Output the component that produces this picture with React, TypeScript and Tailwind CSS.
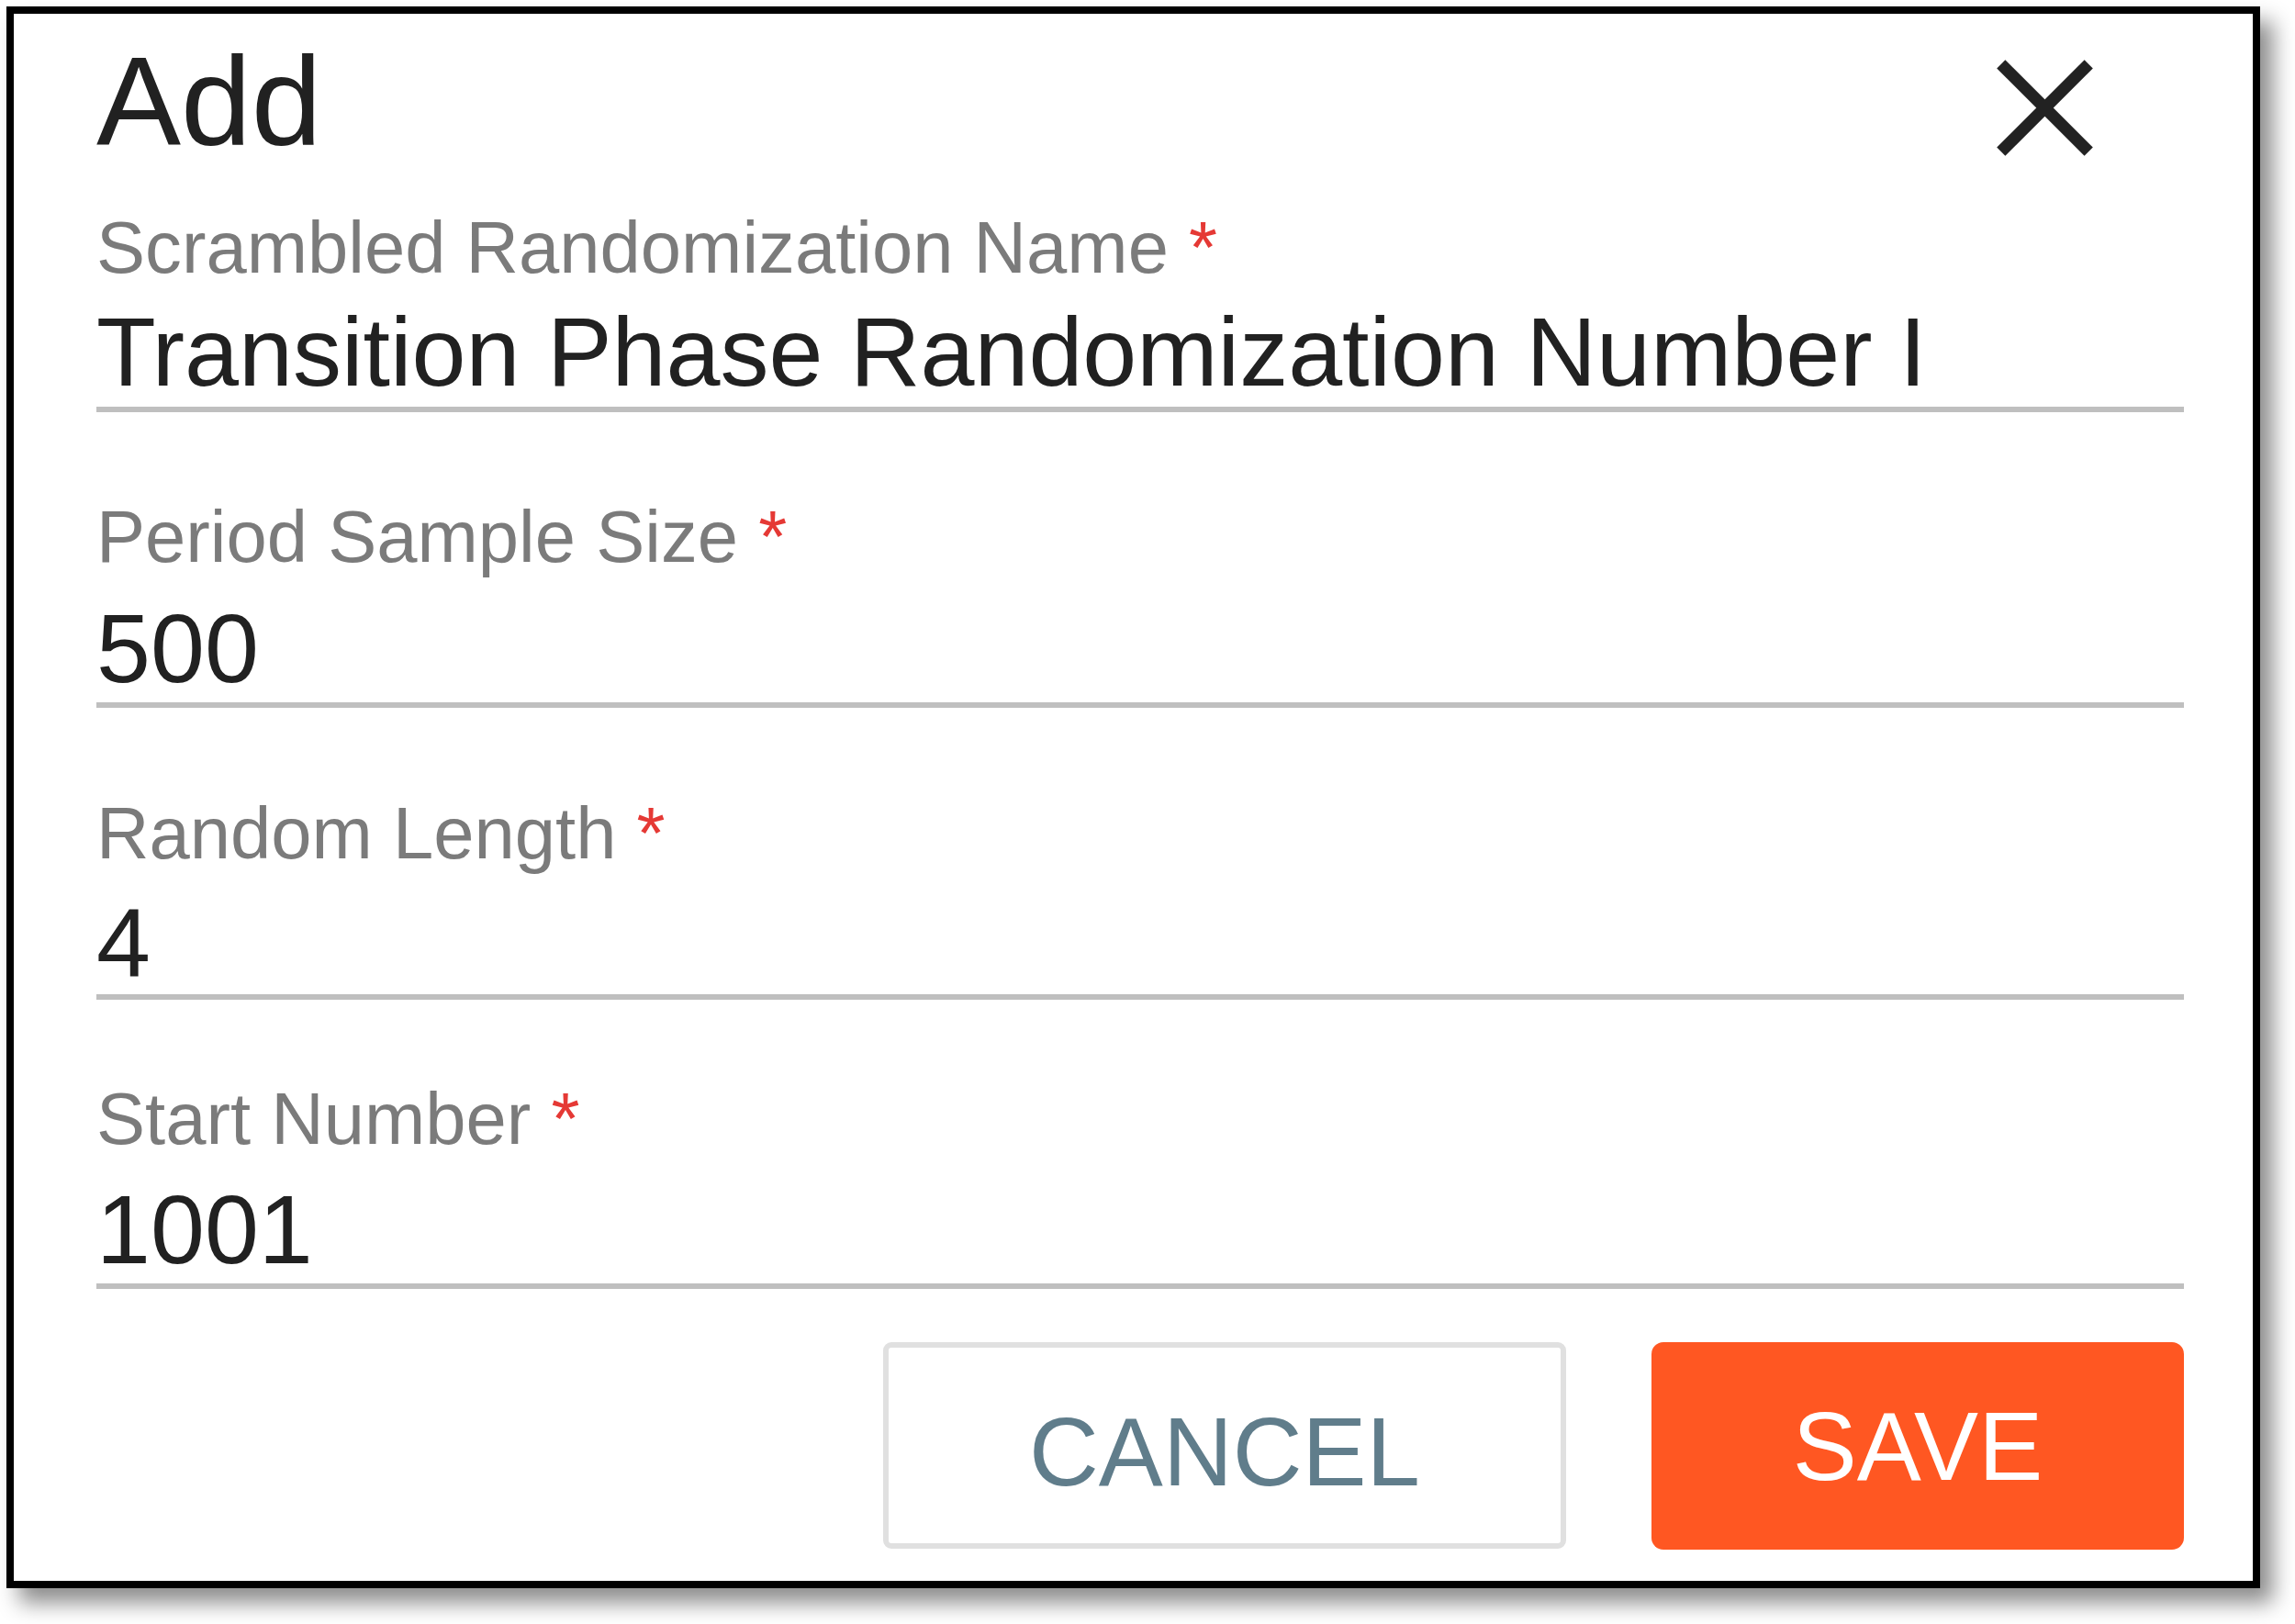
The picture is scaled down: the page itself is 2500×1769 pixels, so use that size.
import React from "react";

type Field = {
  label: string;
  value: string;
  labelMt: string;
  valueMt: string;
  lineMt: string;
};

const fields: Field[] = [
  { label: "Scrambled Randomization Name", value: "Transition Phase Randomization Number I", labelMt: "mt-[49px]", valueMt: "mt-[20px]", lineMt: "mt-[7px]" },
  { label: "Period Sample Size", value: "500", labelMt: "mt-[96px]", valueMt: "mt-[28px]", lineMt: "mt-[6px]" },
  { label: "Random Length", value: "4", labelMt: "mt-[97px]", valueMt: "mt-[26px]", lineMt: "mt-[3px]" },
  { label: "Start Number", value: "1001", labelMt: "mt-[90px]", valueMt: "mt-[27px]", lineMt: "mt-[6px]" },
];

function CloseIcon() {
  return (
    <svg width="105" height="105" viewBox="0 0 105 105" fill="none">
      <line x1="4.8" y1="4.8" x2="100.2" y2="100.2" stroke="#222222" strokeWidth="13" />
      <line x1="100.2" y1="4.8" x2="4.8" y2="100.2" stroke="#222222" strokeWidth="13" />
    </svg>
  );
}

export default function App() {
  return (
    <div
      className="w-[2500px] h-[1769px] bg-white pt-[7px] pl-[7px] overflow-hidden"
      style={{ fontFamily: '"Liberation Sans", Arial, Helvetica, sans-serif' }}
    >
      <div className="w-[2455px] h-[1723px] border-[8px] border-black bg-white pl-[90px] pr-[75px] pt-[26px] flex flex-col shadow-[14px_16px_22px_rgba(0,0,0,0.45)]">
        <div className="h-[140px] flex justify-between items-start">
          <span className="text-[138px] leading-[138px] text-[#212121]">Add</span>
          <div className="mt-[24px] mr-[99px]">
            <CloseIcon />
          </div>
        </div>

        {fields.map((f) => (
          <div key={f.label} className="flex flex-col">
            <div className={`${f.labelMt} h-[80px] text-[79.6px] leading-[80px] text-[#7b7b7b] whitespace-nowrap`}>
              {f.label} <span className="text-[#e53935]">*</span>
            </div>
            <div className={`${f.valueMt} h-[106px] text-[106px] leading-[106px] text-[#212121] whitespace-nowrap`}>
              {f.value}
            </div>
            <div className={`${f.lineMt} h-[6px] bg-[#bfbfbf]`} />
          </div>
        ))}

        <div className="mt-[58px] flex justify-end gap-[93px]">
          <div className="w-[744px] h-[225px] border-[6px] border-[#e0e0e0] rounded-[9px] bg-white flex items-center justify-center pt-[14px]">
            <span className="text-[105px] leading-[105px] text-[#607d8b]">CANCEL</span>
          </div>
          <div className="w-[580px] h-[226px] rounded-[13px] bg-[#ff5722] flex items-center justify-center">
            <span className="text-[105px] leading-[105px] text-white">SAVE</span>
          </div>
        </div>
      </div>
    </div>
  );
}
